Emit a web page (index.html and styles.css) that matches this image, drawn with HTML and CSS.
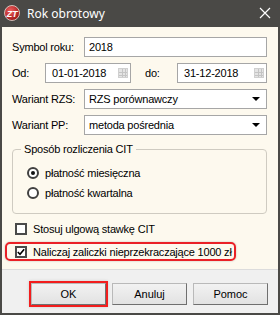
FILE: index.html
```html
<!DOCTYPE html>
<html lang="pl">
<head>
    <meta charset="UTF-8">
    <title>Rok obrotowy</title>
    <link rel="stylesheet" href="styles.css">
</head>
<body>
    <div class="window">
        <div class="titlebar">
            <svg class="logo" viewBox="0 0 16 16" width="16" height="16">
                <defs>
                    <radialGradient id="lg" cx="40%" cy="35%" r="65%">
                        <stop offset="0" stop-color="#f06060"/>
                        <stop offset="1" stop-color="#a01818"/>
                    </radialGradient>
                </defs>
                <circle cx="8" cy="8" r="7.5" fill="url(#lg)"/>
                <circle cx="8" cy="8" r="7.5" fill="none" stroke="#e9e0d8" stroke-width="0.8"/>
                <text x="8" y="11.5" text-anchor="middle" font-family="Liberation Sans, sans-serif" font-size="9" font-weight="bold" fill="#fff" font-style="italic">ZT</text>
            </svg>
            <span class="title">Rok obrotowy</span>
            <svg class="close" viewBox="0 0 12 12" width="12" height="12">
                <path d="M1 1 L11 11 M11 1 L1 11" stroke="#fff" stroke-width="1.2" fill="none"/>
            </svg>
        </div>

        <div class="content">
            <div class="row">
                <span class="lbl">Symbol roku:</span>
                <div class="field">2018</div>
            </div>
            <div class="row">
                <span class="lbl lbl-od">Od:</span>
                <div class="field date date-od">
                    <span>01-01-2018</span>
                    <span class="cal"></span>
                </div>
                <span class="lbl lbl-do">do:</span>
                <div class="field date">
                    <span>31-12-2018</span>
                    <span class="cal"></span>
                </div>
            </div>
            <div class="row">
                <span class="lbl">Wariant RZS:</span>
                <div class="field select">
                    <span>RZS porównawczy</span>
                    <span class="arrow"></span>
                </div>
            </div>
            <div class="row">
                <span class="lbl">Wariant PP:</span>
                <div class="field select">
                    <span>metoda pośrednia</span>
                    <span class="arrow"></span>
                </div>
            </div>

            <fieldset class="group">
                <legend>Sposób rozliczenia CIT</legend>
                <div class="radio-row">
                    <span class="radio checked"></span>
                    <span>płatność miesięczna</span>
                </div>
                <div class="radio-row">
                    <span class="radio"></span>
                    <span>płatność kwartalna</span>
                </div>
            </fieldset>

            <div class="check-row">
                <span class="check"></span>
                <span>Stosuj ulgową stawkę CIT</span>
            </div>
            <div class="check-row marked">
                <span class="check checked">
                    <svg viewBox="0 0 8 8" width="8" height="8"><path d="M0.8 4 L3 6.3 L7.2 1.2" stroke="#000" stroke-width="1.6" fill="none"/></svg>
                </span>
                <span>Naliczaj zaliczki nieprzekraczające 1000 zł</span>
            </div>
        </div>

        <div class="buttons">
            <button class="btn btn-ok">OK</button>
            <button class="btn">Anuluj</button>
            <button class="btn">Pomoc</button>
        </div>
    </div>
</body>
</html>
```

FILE: styles.css
```css
body {
    margin: 0;
    font-family: "Liberation Sans", Arial, sans-serif;
    font-size: 11px;
    letter-spacing: -0.2px;
    color: #000;
}
.window {
    width: 280px;
    height: 315px;
    box-sizing: border-box;
    background: #4a4946;
    padding: 0 2px 2px;
    display: flex;
    flex-direction: column;
}
.titlebar {
    height: 27px;
    flex: none;
    display: flex;
    align-items: center;
    padding: 0 0 1px 2px;
    box-sizing: border-box;
}
.logo {
    flex: none;
}
.title {
    margin-left: 7px;
    color: #fff;
    font-family: "Noto Sans", "Open Sans", sans-serif;
    font-size: 12px;
    letter-spacing: 0;
    flex: 1;
}
.close {
    margin-right: 7px;
}
.content {
    flex: 1;
    background: #fdf9ee;
    padding: 10px 11px 0 10px;
    display: flex;
    flex-direction: column;
}
.row {
    display: flex;
    align-items: center;
    height: 20px;
    margin-bottom: 6px;
}
.lbl {
    width: 72px;
    flex: none;
}
.lbl-od {
    width: 33px;
}
.lbl-do {
    width: 32px;
    margin-left: 14px;
}
.field {
    flex: 1;
    height: 20px;
    box-sizing: border-box;
    border: 1px solid #a6a6a6;
    background: #fff;
    display: flex;
    align-items: center;
    padding: 0 4px;
}
.date {
    padding: 0 2px 0 6px;
    justify-content: space-between;
}
.date-od {
    flex: none;
    width: 86px;
}
.cal {
    width: 10px;
    height: 10px;
    background-color: #e4e4e4;
    background-image:
        linear-gradient(90deg, transparent 3px, #c4c4c4 3px, #c4c4c4 4px, transparent 4px, transparent 6px, #c4c4c4 6px, #c4c4c4 7px, transparent 7px),
        linear-gradient(transparent 3px, #c4c4c4 3px, #c4c4c4 4px, transparent 4px, transparent 6px, #c4c4c4 6px, #c4c4c4 7px, transparent 7px);
    border: 1px solid #d0d0d0;
    box-sizing: border-box;
}
.select {
    justify-content: space-between;
    padding-right: 6px;
}
.arrow {
    width: 0;
    height: 0;
    border-left: 4px solid transparent;
    border-right: 4px solid transparent;
    border-top: 4px solid #000;
}
.group {
    margin: 2px 0 0;
    padding: 0 0 10px 14px;
    border: 1px solid #cfcbc1;
    border-radius: 4px;
}
.group legend {
    padding: 0 3px;
    margin-left: -6px;
    line-height: 13px;
}
.radio-row {
    display: flex;
    align-items: center;
    gap: 6px;
    height: 20px;
}
.radio-row:first-of-type {
    margin-top: 7px;
}
.radio {
    width: 12px;
    height: 12px;
    box-sizing: border-box;
    border: 2px solid #404040;
    border-radius: 50%;
    background: #fff;
    display: flex;
    align-items: center;
    justify-content: center;
}
.radio.checked::after {
    content: "";
    width: 4px;
    height: 4px;
    border-radius: 50%;
    background: #111;
}
.check-row {
    display: flex;
    align-items: center;
    gap: 6px;
    height: 20px;
    margin-top: 5px;
    padding-left: 3px;
}
.check {
    width: 12px;
    height: 12px;
    box-sizing: border-box;
    border: 2px solid #4a4a4a;
    background: #fff;
    display: flex;
    align-items: center;
    justify-content: center;
}
.marked {
    align-self: flex-start;
    white-space: nowrap;
    height: 19px;
    box-sizing: border-box;
    margin: 3px 0 0 -7px;
    padding: 0 2px 0 8px;
    border: 2px solid #ea2027;
    border-radius: 5px;
    box-shadow: 0 0 2px rgba(0, 0, 0, 0.25);
}
.buttons {
    height: 44px;
    flex: none;
    border-top: 1px solid #dcdcdc;
    background: #f0f0f0;
    display: flex;
    justify-content: flex-end;
    gap: 6px;
    padding: 13px 10px 0 0;
    box-sizing: border-box;
}
.btn {
    width: 75px;
    height: 22px;
    font-family: "Liberation Sans", Arial, sans-serif;
    font-size: 11px;
    color: #000;
    background: linear-gradient(#f2f2f2, #e2e2e2);
    border: 1px solid #b9b9b9;
    border-right-color: #6f6f6f;
    border-bottom-color: #6f6f6f;
    padding: 0;
}
.btn-ok {
    outline: 2px solid #f21d1d;
    outline-offset: 0;
    box-shadow: 0 0 3px 2px rgba(0, 0, 0, 0.15);
}
```
